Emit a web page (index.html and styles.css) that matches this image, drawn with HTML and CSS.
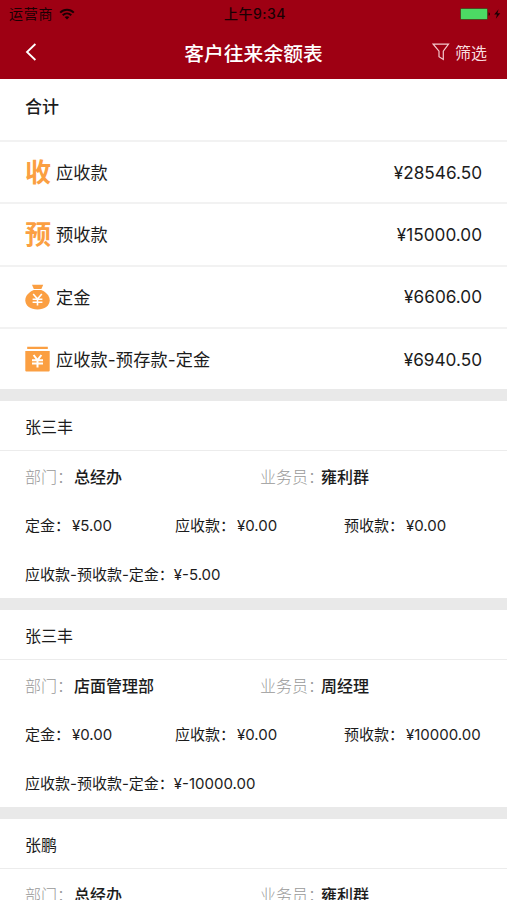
FILE: index.html
```
<!DOCTYPE html>
<html lang="zh-CN">
<head>
  <meta charset="UTF-8">
  <meta name="viewport" content="width=device-width, initial-scale=1.0">
  <link rel="stylesheet" href="styles.css">
  <title>客户往来余额表</title>
</head>
<body>

  <header class="header">
    <div class="status-bar">
      <div class="status-carrier">
        <span>运营商</span>
        <svg width="16" height="12" viewBox="0 0 16 12" fill="none" stroke="#1a0003" stroke-width="2">
          <path d="M1.2 4.6C5 0.8 11 0.8 14.8 4.6"/>
          <path d="M3.7 7.2C6.2 4.8 9.8 4.8 12.3 7.2"/>
          <path d="M8 11.5L5.6 9.1C7 7.8 9 7.8 10.4 9.1Z" fill="#1a0003" stroke="none"/>
        </svg>
      </div>
      <span class="status-time">上午9:34</span>
      <div class="status-battery">
        <svg width="41" height="12" viewBox="0 0 41 12">
          <rect x="0.5" y="0.5" width="27" height="11" rx="1" fill="#4cd964" stroke="#3c2a10" stroke-width="0.6"/>
          <path d="M28.6 4.2C30.3 4.6 30.3 7.4 28.6 7.8Z" fill="#1a0003"/>
          <path d="M38.6 1.2L34.2 6.6H37L35.8 10.8L40.3 5.2H37.4Z" fill="#1a0003"/>
        </svg>
      </div>
    </div>
    <nav class="nav">
      <a class="nav-back">
        <svg width="12" height="18" viewBox="0 0 12 18" fill="none" stroke="#fff" stroke-width="1.8">
          <path d="M10.4 1L2 9L10.4 17"/>
        </svg>
      </a>
      <h1>客户往来余额表</h1>
      <a class="nav-filter">
        <svg width="18" height="18" viewBox="0 0 18 18" fill="none" stroke="#f3c9cd" stroke-width="1.2">
          <path d="M1.2 1.2H16.5L11.3 8.2V16.4L7 13.7V8.2Z"/>
        </svg>
        <span>筛选</span>
      </a>
    </nav>
  </header>

  <main>
    <section class="summary">
      <h2>合计</h2>
      <div class="summary-row">
        <span class="summary-icon summary-icon-text">收</span>
        <span class="summary-label">应收款</span>
        <span class="summary-amount">¥28546.50</span>
      </div>
      <div class="summary-row">
        <span class="summary-icon summary-icon-text">预</span>
        <span class="summary-label">预收款</span>
        <span class="summary-amount">¥15000.00</span>
      </div>
      <div class="summary-row">
        <svg class="summary-icon" width="25" height="26" viewBox="0 0 25 26">
          <path d="M7 0.8H18.2L16.4 5H8.8Z" fill="#fb9f42"/>
          <path d="M8.8 6.1H16.2C21 8 24.7 12 24.7 16.3C24.7 22 19.5 25.5 12.5 25.5S0.3 22 0.3 16.3C0.3 12 4 8 8.8 6.1Z" fill="#fb9f42"/>
          <path d="M8.2 10L12.5 15L16.8 10M7.6 15.2H17.4M7.6 18.2H17.4M12.5 15V21.6" fill="none" stroke="#fff" stroke-width="1.6"/>
        </svg>
        <span class="summary-label">定金</span>
        <span class="summary-amount">¥6606.00</span>
      </div>
      <div class="summary-row">
        <svg class="summary-icon" width="25" height="26" viewBox="0 0 25 26">
          <path d="M2.2 0.8H22.8V3H2.2ZM0.3 5H24.7V24.5Q24.7 25.5 23.7 25.5H1.3Q0.3 25.5 0.3 24.5Z" fill="#fb9f42"/>
          <path d="M8.6 9L12.5 14L16.4 9M7 14.2H18M7 17.4H18M12.5 14V21.6" fill="none" stroke="#fff" stroke-width="2"/>
        </svg>
        <span class="summary-label">应收款-预存款-定金</span>
        <span class="summary-amount">¥6940.50</span>
      </div>
    </section>

    <section class="customer">
      <h3>张三丰</h3>
      <div class="customer-info">
        <p><span class="info-label">部门：</span>总经办</p>
        <p><span class="info-label info-label-staff">业务员：</span>雍利群</p>
      </div>
      <div class="customer-amounts">
        <p>定金：<span>¥5.00</span></p>
        <p>应收款：<span>¥0.00</span></p>
        <p>预收款：<span>¥0.00</span></p>
      </div>
      <p class="customer-balance">应收款-预收款-定金：<span>¥-5.00</span></p>
    </section>

    <section class="customer">
      <h3>张三丰</h3>
      <div class="customer-info">
        <p><span class="info-label">部门：</span>店面管理部</p>
        <p><span class="info-label info-label-staff">业务员：</span>周经理</p>
      </div>
      <div class="customer-amounts">
        <p>定金：<span>¥0.00</span></p>
        <p>应收款：<span>¥0.00</span></p>
        <p>预收款：<span>¥10000.00</span></p>
      </div>
      <p class="customer-balance">应收款-预收款-定金：<span>¥-10000.00</span></p>
    </section>

    <section class="customer">
      <h3>张鹏</h3>
      <div class="customer-info">
        <p><span class="info-label">部门：</span>总经办</p>
        <p><span class="info-label info-label-staff">业务员：</span>雍利群</p>
      </div>
    </section>
  </main>

</body>
</html>
```
FILE: styles.css
```
* {
  box-sizing: border-box;
}

body {
  margin: 0;
  height: 900px;
  overflow: hidden;
  background-color: #e9e9e9;
  font-family: 'Inter', 'Noto Sans CJK SC', sans-serif;
  color: #1c1c1c;
}

h1, h2, h3, p {
  margin: 0;
}

.header {
  height: 79px;
  background-color: #9e0013;
}

.status-bar {
  display: grid;
  grid-template-columns: 1fr auto 1fr;
  align-items: center;
  height: 27px;
  padding: 0 6px 0 9px;
  font-size: 14px;
  line-height: 16px;
  color: #1a0003;
}

.status-carrier {
  display: flex;
  align-items: center;
  gap: 6px;
  letter-spacing: 0.7px;
}

.status-time {
  font-weight: 500;
  letter-spacing: 0.5px;
}

.status-battery {
  display: flex;
  justify-content: flex-end;
}

.nav {
  display: grid;
  grid-template-columns: 1fr auto 1fr;
  align-items: center;
  height: 50px;
  padding: 0 20px;
  color: #fff;
}

.nav-back {
  display: flex;
  padding-left: 5px;
}

.nav h1 {
  font-size: 19.8px;
  font-weight: 500;
}

.nav-filter {
  display: flex;
  align-items: center;
  justify-content: flex-end;
  gap: 5px;
  font-size: 16px;
  color: #f8dcdf;
}

.summary {
  background-color: #fff;
}

.summary h2 {
  height: 61px;
  padding-left: 25px;
  line-height: 57px;
  font-size: 17px;
  font-weight: 500;
}

.summary-row {
  display: flex;
  align-items: center;
  height: 62.3px;
  padding: 0 25px;
  border-top: 2px solid #f2f2f2;
  font-size: 17.2px;
}

.summary-icon {
  flex: none;
  width: 25px;
  margin-right: 6px;
}

.summary-icon-text {
  padding-top: 2px;
  font-size: 26px;
  font-weight: 700;
  line-height: 30px;
  color: #fb9f42;
}

.summary-label {
  padding-bottom: 1px;
  letter-spacing: 0.1px;
}

.summary-amount {
  margin-left: auto;
}

.customer {
  height: 197px;
  margin-top: 11.9px;
  background-color: #fff;
}

.customer h3 {
  height: 50px;
  padding-left: 25px;
  border-bottom: 1px solid #ececec;
  line-height: 52px;
  font-size: 16px;
  font-weight: 400;
}

.customer-info {
  display: grid;
  grid-template-columns: 235px 1fr;
  height: 50px;
  padding-left: 25px;
  line-height: 52px;
  font-size: 16px;
  font-weight: 500;
}

.info-label {
  display: inline-block;
  width: 49px;
  font-weight: 300;
  color: #999;
}

.info-label-staff {
  width: 61px;
  white-space: nowrap;
}

.customer-amounts {
  display: grid;
  grid-template-columns: 150px 169px 1fr;
  height: 49px;
  padding-left: 25px;
  line-height: 49px;
  font-size: 15px;
  white-space: nowrap;
}

.customer-amounts span {
  margin-left: 2px;
}

.customer-balance {
  height: 48px;
  padding-left: 25px;
  line-height: 49px;
  font-size: 15px;
}
```
